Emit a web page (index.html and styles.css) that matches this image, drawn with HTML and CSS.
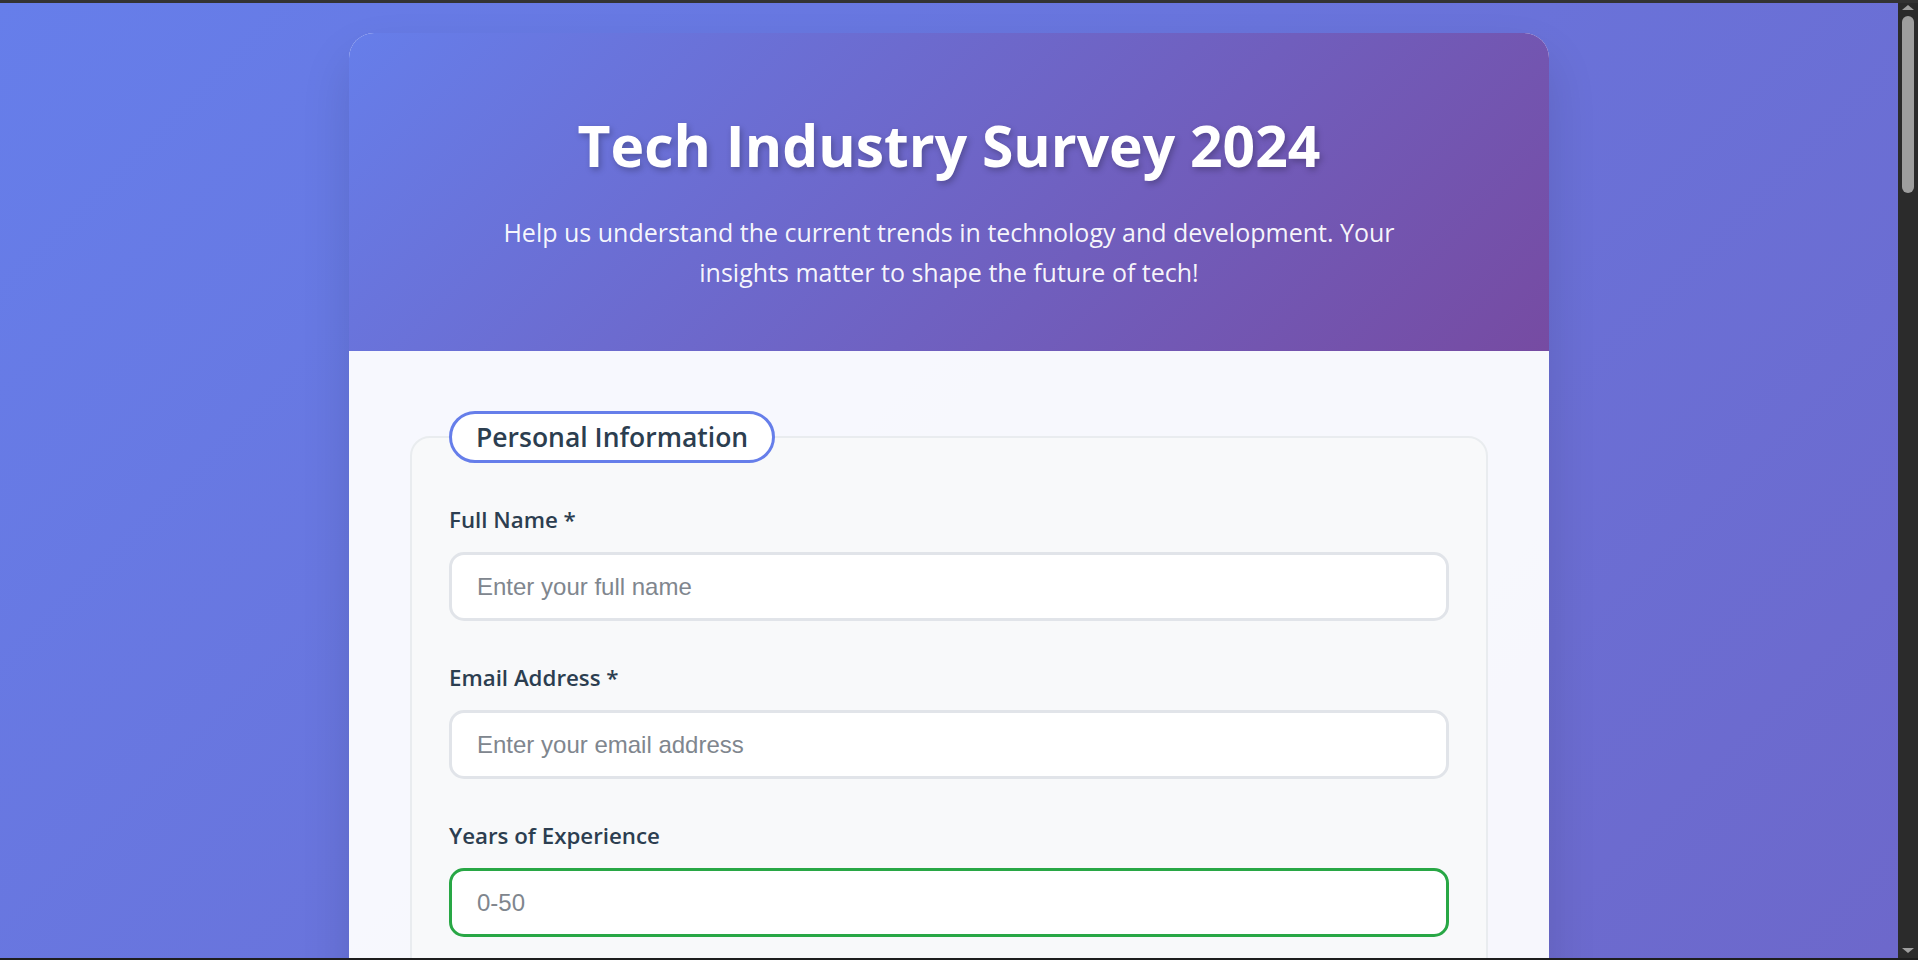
FILE: index.html
```html
<!DOCTYPE html>
<html lang="en">
<head>
<meta charset="utf-8">
<title>Tech Industry Survey 2024</title>
<link rel="stylesheet" href="styles.css">
</head>
<body>
<div class="frame"></div>
<div class="scrollbar" aria-hidden="true">
  <span class="sb-arrow sb-up"></span>
  <span class="sb-thumb"></span>
  <span class="sb-arrow sb-down"></span>
</div>
<div class="container">
  <header class="survey-header">
    <h1>Tech Industry Survey 2024</h1>
    <p class="subtitle">Help us understand the current trends in technology and development. Your insights matter to shape the future of tech!</p>
  </header>

  <form class="survey-form">
    <fieldset class="section">
      <legend>Personal Information</legend>
      <div class="form-group">
        <label for="fullname">Full Name *</label>
        <input id="fullname" type="text" placeholder="Enter your full name">
      </div>
      <div class="form-group">
        <label for="email">Email Address *</label>
        <input id="email" type="email" placeholder="Enter your email address">
      </div>
      <div class="form-group">
        <label for="experience">Years of Experience</label>
        <input id="experience" class="valid" type="text" placeholder="0-50">
      </div>
      <div class="form-group">
        <label for="role">Current Role</label>
        <select id="role">
          <option>Select your role</option>
          <option>Frontend Developer</option>
          <option>Backend Developer</option>
          <option>Full Stack Developer</option>
          <option>DevOps Engineer</option>
          <option>Data Scientist</option>
        </select>
      </div>
      <div class="form-group">
        <label for="location">Location</label>
        <input id="location" type="text" placeholder="City, Country">
      </div>
    </fieldset>

    <fieldset class="section">
      <legend>Technical Skills</legend>
      <div class="form-group">
        <label for="language">Primary Programming Language</label>
        <select id="language">
          <option>Select a language</option>
          <option>JavaScript</option>
          <option>Python</option>
          <option>Java</option>
          <option>Go</option>
          <option>Rust</option>
        </select>
      </div>
      <div class="form-group">
        <span class="group-label">Technologies you use regularly</span>
        <div class="options">
          <label class="option"><input type="checkbox"> React</label>
          <label class="option"><input type="checkbox"> Vue.js</label>
          <label class="option"><input type="checkbox"> Angular</label>
          <label class="option"><input type="checkbox"> Node.js</label>
          <label class="option"><input type="checkbox"> Django</label>
          <label class="option"><input type="checkbox"> Spring Boot</label>
          <label class="option"><input type="checkbox"> Docker</label>
          <label class="option"><input type="checkbox"> Kubernetes</label>
          <label class="option"><input type="checkbox"> AWS</label>
          <label class="option"><input type="checkbox"> Azure</label>
          <label class="option"><input type="checkbox"> GraphQL</label>
          <label class="option"><input type="checkbox"> TypeScript</label>
        </div>
      </div>
      <div class="form-group">
        <label for="skill">Overall skill level (1-10)</label>
        <input id="skill" class="range" type="range" min="1" max="10" value="6">
      </div>
    </fieldset>

    <fieldset class="section">
      <legend>Work Environment</legend>
      <div class="form-group">
        <span class="group-label">Preferred work arrangement</span>
        <div class="options">
          <label class="option"><input type="radio" name="arrangement"> Fully Remote</label>
          <label class="option"><input type="radio" name="arrangement"> Hybrid</label>
          <label class="option"><input type="radio" name="arrangement"> On-site</label>
        </div>
      </div>
      <div class="form-group">
        <label for="company">Company Size</label>
        <select id="company">
          <option>Select company size</option>
          <option>1-10 employees</option>
          <option>11-50 employees</option>
          <option>51-200 employees</option>
          <option>201-1000 employees</option>
          <option>1000+ employees</option>
        </select>
      </div>
      <div class="form-group">
        <label for="salary">Annual Salary Range</label>
        <select id="salary">
          <option>Prefer not to say</option>
          <option>Under $50,000</option>
          <option>$50,000 - $100,000</option>
          <option>$100,000 - $150,000</option>
          <option>Over $150,000</option>
        </select>
      </div>
      <div class="form-group">
        <span class="group-label">Job satisfaction</span>
        <div class="options">
          <label class="option"><input type="radio" name="satisfaction"> Very satisfied</label>
          <label class="option"><input type="radio" name="satisfaction"> Satisfied</label>
          <label class="option"><input type="radio" name="satisfaction"> Neutral</label>
          <label class="option"><input type="radio" name="satisfaction"> Dissatisfied</label>
          <label class="option"><input type="radio" name="satisfaction"> Very dissatisfied</label>
        </div>
      </div>
    </fieldset>

    <fieldset class="section">
      <legend>Learning &amp; Growth</legend>
      <div class="form-group">
        <span class="group-label">How do you keep your skills up to date?</span>
        <div class="options">
          <label class="option"><input type="checkbox"> Online courses</label>
          <label class="option"><input type="checkbox"> Documentation</label>
          <label class="option"><input type="checkbox"> Conferences</label>
          <label class="option"><input type="checkbox"> Side projects</label>
          <label class="option"><input type="checkbox"> Open source</label>
          <label class="option"><input type="checkbox"> Mentorship</label>
        </div>
      </div>
      <div class="form-group">
        <label for="learn">Technology you want to learn next</label>
        <input id="learn" type="text" placeholder="e.g. Rust, WebAssembly, AI/ML">
      </div>
    </fieldset>

    <fieldset class="section">
      <legend>Additional Feedback</legend>
      <div class="form-group">
        <label for="trends">What trends excite you most?</label>
        <textarea id="trends" placeholder="Share your thoughts..."></textarea>
      </div>
      <div class="form-group">
        <label for="comments">Any other comments?</label>
        <textarea id="comments" placeholder="Anything else you'd like to add"></textarea>
      </div>
    </fieldset>

    <div class="actions">
      <button type="submit" class="submit">Submit Survey</button>
    </div>
  </form>
</div>
</body>
</html>
```

FILE: styles.css
```css
body {
  margin: 0;
  padding: 33px 40px 80px 20px;
  font-family: "Open Sans", "Noto Sans", sans-serif;
  background: linear-gradient(135deg, #667eea 0%, #764ba2 100%);
  min-height: 100vh;
}

/* window frame lines drawn over the page */
.frame {
  position: fixed;
  inset: 0;
  border-top: 3px solid #333;
  border-bottom: 2px solid #1e1e1e;
  pointer-events: none;
  z-index: 20;
}

/* dark browser scrollbar drawn over the right edge */
.scrollbar {
  position: fixed;
  top: 0;
  right: 0;
  bottom: 0;
  width: 20px;
  box-sizing: border-box;
  padding: 5px 0 7px;
  background: #2b2b2b;
  display: flex;
  flex-direction: column;
  align-items: center;
  z-index: 10;
}

.sb-arrow {
  width: 0;
  height: 0;
  border-left: 6px solid transparent;
  border-right: 6px solid transparent;
}

.sb-up {
  border-bottom: 5px solid #9e9e9e;
}

.sb-down {
  margin-top: auto;
  border-top: 5px solid #9e9e9e;
}

.sb-thumb {
  width: 12px;
  height: 177px;
  margin-top: 6px;
  border-radius: 6px;
  background: #9e9e9e;
}

.container {
  max-width: 1200px;
  margin: 0 auto;
  background: rgba(255, 255, 255, 0.95);
  border-radius: 25px;
  overflow: hidden;
  box-shadow: 0 25px 50px rgba(0, 0, 0, 0.12);
}

.survey-header {
  background: linear-gradient(135deg, #667eea 0%, #764ba2 100%);
  color: #fff;
  text-align: center;
  padding: 76px 40px 59px;
}

.survey-header h1 {
  margin: 0;
  font-size: 57px;
  line-height: 72px;
  font-weight: 700;
  text-shadow: 2px 3px 6px rgba(0, 0, 0, 0.25);
}

.subtitle {
  margin: 31px auto 0;
  max-width: 925px;
  font-size: 25px;
  line-height: 40px;
  color: rgba(255, 255, 255, 0.95);
}

.survey-form {
  padding: 60px 61px 75px;
}

.section {
  margin: 0 0 60px;
  padding: 41px 37px 20px;
  border: 2px solid #e9ecef;
  border-radius: 20px;
  background: #f8f9fa;
}

.section legend {
  padding: 0 24px;
  border: 3px solid #667eea;
  border-radius: 30px;
  background: #fff;
  font-size: 26.5px;
  line-height: 46px;
  font-weight: 600;
  color: #2c3e50;
}

.form-group {
  margin-bottom: 41px;
}

.form-group > label,
.group-label {
  display: block;
  margin-bottom: 16px;
  font-size: 22.3px;
  line-height: 32px;
  font-weight: 600;
  color: #2c3e50;
}

input[type="text"],
input[type="email"],
select,
textarea {
  display: block;
  width: 100%;
  box-sizing: border-box;
  height: 69px;
  padding: 0 25px;
  border: 3px solid #e1e4e9;
  border-radius: 15px;
  background: #fff;
  font-family: "Liberation Sans", Arial, sans-serif;
  font-size: 24px;
  color: #2c3e50;
  outline: none;
}

textarea {
  height: 180px;
  padding: 20px 25px;
  resize: vertical;
}

input.valid {
  border-color: #28a745;
}

::placeholder {
  color: #80868e;
}

.range {
  display: block;
  width: 100%;
  height: 40px;
  margin: 0;
  accent-color: #667eea;
}

.options {
  display: grid;
  grid-template-columns: repeat(3, 1fr);
  gap: 16px;
}

.option {
  display: flex;
  align-items: center;
  gap: 14px;
  padding: 18px 22px;
  border: 3px solid #e1e4e9;
  border-radius: 15px;
  background: #fff;
  font-size: 20px;
  color: #2c3e50;
}

.option input {
  width: 22px;
  height: 22px;
  margin: 0;
  accent-color: #667eea;
}

.actions {
  display: flex;
  justify-content: center;
  padding-top: 10px;
}

.submit {
  padding: 22px 70px;
  border: none;
  border-radius: 40px;
  background: linear-gradient(135deg, #667eea 0%, #764ba2 100%);
  color: #fff;
  font-family: "Open Sans", "Noto Sans", sans-serif;
  font-size: 22px;
  font-weight: 700;
  box-shadow: 0 10px 25px rgba(102, 126, 234, 0.35);
}
```
